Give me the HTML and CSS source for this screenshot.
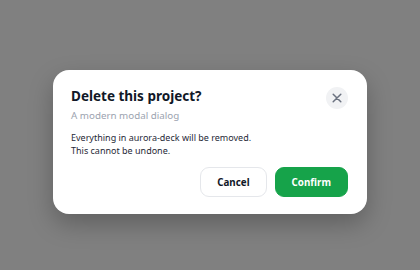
FILE: index.html
```html
<!DOCTYPE html>
<html>
<head>
<meta charset="utf-8">
<link rel="stylesheet" href="styles.css">
</head>
<body>
<div class="overlay">
  <div class="modal">
    <div class="header">
      <div class="titles">
        <h2 class="title">Delete this project?</h2>
        <p class="subtitle">A modern modal dialog</p>
      </div>
      <button class="close" aria-label="Close">
        <svg width="10" height="10" viewBox="0 0 10 10"><path d="M1.2 1.2L8.8 8.8M8.8 1.2L1.2 8.8" stroke="#6b7280" stroke-width="1.5" stroke-linecap="round"/></svg>
      </button>
    </div>
    <p class="body">Everything in aurora-deck will be removed.<br>This cannot be undone.</p>
    <div class="actions">
      <button class="btn cancel">Cancel</button>
      <button class="btn confirm">Confirm</button>
    </div>
  </div>
</div>
</body>
</html>
```
FILE: styles.css
```css
* { box-sizing: border-box; }
html, body { margin: 0; padding: 0; }
body {
  width: 420px;
  height: 270px;
  background: #808080;
  font-family: "Noto Sans", sans-serif;
}
.overlay {
  height: 270px;
  display: flex;
  align-items: center;
  justify-content: center;
  padding-top: 14px;
}
.modal {
  width: 314px;
  background: #fff;
  border-radius: 16px;
  padding: 17px 19px 17px 18px;
  box-shadow: 0 10px 25px rgba(0,0,0,0.25);
}
.header {
  display: flex;
  justify-content: space-between;
  align-items: flex-start;
}
.title {
  margin: 0;
  font-size: 13.5px;
  font-weight: 700;
  line-height: 18px;
  color: #111827;
}
.subtitle {
  margin: 4px 0 0;
  font-size: 9.8px;
  line-height: 13px;
  color: #9ca3af;
}
.close {
  width: 22px;
  height: 22px;
  border-radius: 50%;
  border: none;
  background: #f1f2f4;
  display: flex;
  align-items: center;
  justify-content: center;
  padding: 0;
}
.body {
  margin: 9px 0 0;
  font-size: 9px;
  line-height: 13px;
  color: #1f2937;
}
.actions {
  display: flex;
  justify-content: flex-end;
  gap: 8px;
  margin-top: 10px;
}
.btn {
  height: 30px;
  border-radius: 9px;
  font-family: "Noto Sans", sans-serif;
  font-size: 9.8px;
  font-weight: 700;
  padding: 0 16px;
}
.cancel {
  background: #fff;
  border: 1px solid #e5e7eb;
  color: #111827;
}
.confirm {
  background: #16a34a;
  border: 1px solid #16a34a;
  color: #fff;
}
```
